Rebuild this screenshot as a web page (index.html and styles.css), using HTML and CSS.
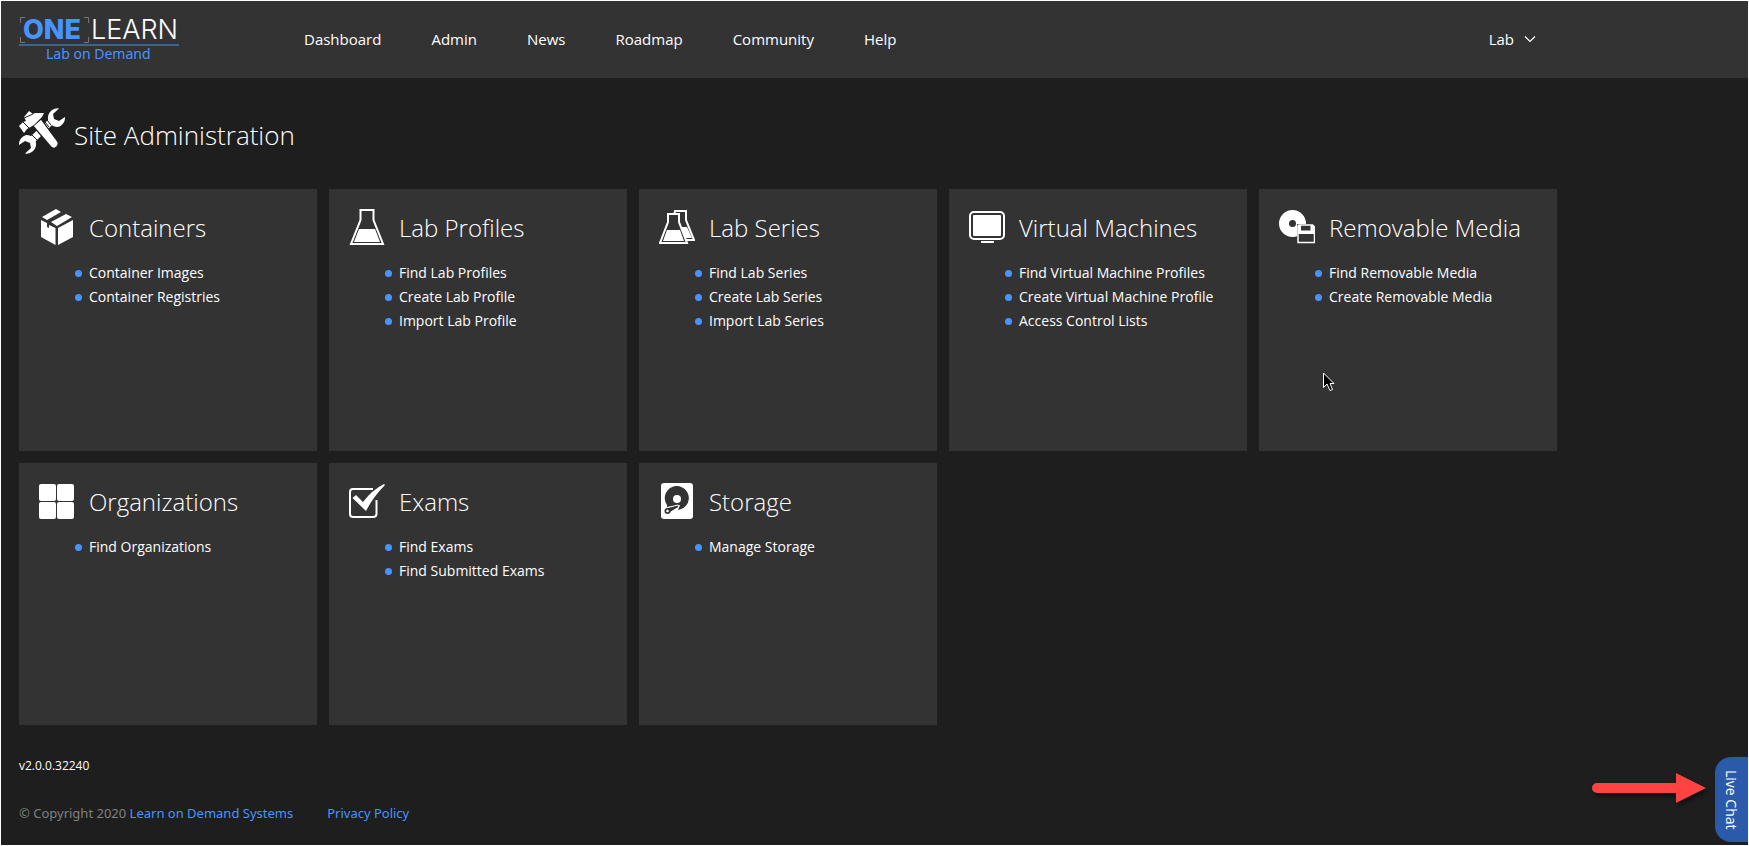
FILE: index.html
```html
<!DOCTYPE html>
<html lang="en">
<head>
<meta charset="utf-8">
<title>Site Administration</title>
<link rel="stylesheet" href="styles.css">
</head>
<body>
<div class="page">
  <header class="topbar">
    <a class="logo" href="#" aria-label="One Learn Lab on Demand">
      <svg width="166" height="56" viewBox="0 -5 166 56">
        <path class="logo-bracket" d="M6 1.500H1.500V7M1.500 21V26.500H6M65 1.500H69.500V7M69.500 21V26.500H65"/>
        <text class="logo-one" x="4" y="23">ONE</text>
        <text class="logo-learn" x="72" y="23">LEARN</text>
        <rect class="logo-rule" x="0" y="28" width="160" height="2"/>
        <text class="logo-sub" x="27" y="43">Lab on Demand</text>
      </svg>
    </a>
    <nav class="nav">
      <a href="#">Dashboard</a>
      <a href="#">Admin</a>
      <a href="#">News</a>
      <a href="#">Roadmap</a>
      <a href="#">Community</a>
      <a href="#">Help</a>
    </nav>
    <button class="account" type="button">Lab
      <svg width="12" height="8" viewBox="0 0 12 8"><path d="M1 1.500L6 6.500L11 1.500" fill="none" stroke="currentColor" stroke-width="1.200"/></svg>
    </button>
  </header>

  <main class="content">
    <div class="heading">
      <svg width="46" height="46" viewBox="0 0 46 46" fill="#fff">
        <path d="M9 31L31 10L35 15L14 36Z"/>
        <path d="M40 .5A9.500 9.500 0 0 0 29 11A9.500 9.500 0 0 0 39 19A9.500 9.500 0 0 0 46 9L40 13L35 11L34 6Z"/>
        <path d="M6 45.500A9.500 9.500 0 0 0 17 35A9.500 9.500 0 0 0 7 27A9.500 9.500 0 0 0 0 37L6 33L11 35L12 40Z"/>
        <path d="M26 14l4 5M28 12l4 5M13 27l5 5" stroke="#1e1e1e" stroke-width="1"/>
        <path d="M14 18L22 11L39 34Q40 38 36 40Q34 41 32 39Z" stroke="#1e1e1e" stroke-width="1.200"/>
        <path d="M10 3L14 6L16 5H25L23 9L15 17L8 21L5 25L0 18L4 14L7 13L5 9Z"/>
        <path d="M5 10L14 6M4 14L11 21" stroke="#1e1e1e" stroke-width="1"/>
      </svg>
      <h1>Site Administration</h1>
    </div>

    <div class="cards">
      <section class="card">
        <svg class="icon" viewBox="0 0 36 36" fill="#fff">
          <path d="M3 8L17 0L22 3L8 11ZM12 13L27 5L33 8L18 17ZM2 11L8 14V18L10 19V16L16.500 19V36L2 28ZM34 11V28L19 36V19Z"/>
        </svg>
        <h2>Containers</h2>
        <ul>
          <li><a href="#">Container Images</a></li>
          <li><a href="#">Container Registries</a></li>
        </ul>
      </section>
      <section class="card">
        <svg class="icon" viewBox="0 0 36 36">
          <path d="M11.500 1H24.500V11L34 35H2L11.500 11Z" fill="none" stroke="#fff" stroke-width="2"/>
          <path d="M10 20H26L31 33H5Z" fill="#fff"/>
        </svg>
        <h2>Lab Profiles</h2>
        <ul>
          <li><a href="#">Find Lab Profiles</a></li>
          <li><a href="#">Create Lab Profile</a></li>
          <li><a href="#">Import Lab Profile</a></li>
        </ul>
      </section>
      <section class="card">
        <svg class="icon" viewBox="0 0 36 36">
          <path d="M16 2H27V11L35 31H20L14 11Z" fill="#333" stroke="#fff" stroke-width="2"/>
          <path d="M22 18H28L33 29H26Z" fill="#fff"/>
          <path d="M9 5H20V13L28 34H1L9 13Z" fill="#333" stroke="#fff" stroke-width="2"/>
          <path d="M8 21H21L25 32H4Z" fill="#fff"/>
        </svg>
        <h2>Lab Series</h2>
        <ul>
          <li><a href="#">Find Lab Series</a></li>
          <li><a href="#">Create Lab Series</a></li>
          <li><a href="#">Import Lab Series</a></li>
        </ul>
      </section>
      <section class="card">
        <svg class="icon" viewBox="0 0 36 36">
          <rect x="1" y="3" width="34" height="27" rx="4" fill="#333" stroke="#fff" stroke-width="2"/>
          <rect x="4" y="6" width="28" height="21" rx="1" fill="#fff"/>
          <path d="M12 32H25V33Q25 34 24 34H13Q12 34 12 33Z" fill="#fff"/>
        </svg>
        <h2>Virtual Machines</h2>
        <ul>
          <li><a href="#">Find Virtual Machine Profiles</a></li>
          <li><a href="#">Create Virtual Machine Profile</a></li>
          <li><a href="#">Access Control Lists</a></li>
        </ul>
      </section>
      <section class="card">
        <svg class="icon" viewBox="0 0 36 36">
          <circle cx="13.500" cy="14.500" r="8.500" fill="none" stroke="#fff" stroke-width="10"/>
          <path d="M18 15H36V35H18Z" fill="#333"/>
          <path d="M20 16H33.500L35.500 18V33.500H19V17Q19 16 20 16Z" fill="#333" stroke="#fff" stroke-width="1.500"/>
          <path d="M19 23H35.500V25H19ZM19 16H22V23H19ZM31.500 16H34L36 18V23H31.500Z" fill="#fff"/>
          <path d="M21 21.500H32V23H21Z" fill="#fff"/>
        </svg>
        <h2>Removable Media</h2>
        <ul>
          <li><a href="#">Find Removable Media</a></li>
          <li><a href="#">Create Removable Media</a></li>
        </ul>
        <svg class="pointer" width="12" height="20" viewBox="0 0 12 20">
          <path d="M.5 1V15.500L4 12L7 18.500L9.500 17.500L7 11.500H11Z" fill="#000" stroke="#fff"/>
        </svg>
      </section>
      <section class="card">
        <svg class="icon" viewBox="0 0 36 36" fill="#fff">
          <rect x="0" y="1" width="17" height="17" rx="2"/><rect x="18" y="1" width="17" height="17" rx="2"/>
          <rect x="0" y="19" width="17" height="17" rx="2"/><rect x="18" y="19" width="17" height="17" rx="2"/>
        </svg>
        <h2>Organizations</h2>
        <ul>
          <li><a href="#">Find Organizations</a></li>
        </ul>
      </section>
      <section class="card">
        <svg class="icon" viewBox="0 0 36 36">
          <path d="M24 6H4Q1 6 1 9V31Q1 34 4 34H24Q27.500 34 27.500 31V17" fill="none" stroke="#fff" stroke-width="2"/>
          <path d="M3.500 15L7 12L14 19Q23 7 35 1L36 2Q24 14 17 28Z" fill="#fff"/>
        </svg>
        <h2>Exams</h2>
        <ul>
          <li><a href="#">Find Exams</a></li>
          <li><a href="#">Find Submitted Exams</a></li>
        </ul>
      </section>
      <section class="card">
        <svg class="icon" viewBox="0 0 36 36">
          <rect x="2" y="0" width="32" height="36" rx="3" fill="#fff"/>
          <path d="M8 22A12 12 0 1 1 19 27L21 22L8 24Z" fill="#333"/>
          <circle cx="18" cy="16" r="4" fill="#fff"/>
          <path d="M7 25L19 22L20 24L10 30Z" fill="#333" stroke="#fff" stroke-width="1"/>
          <circle cx="8.500" cy="28" r="3" fill="#333"/><circle cx="8.500" cy="28" r="1.300" fill="#fff"/>
        </svg>
        <h2>Storage</h2>
        <ul>
          <li><a href="#">Manage Storage</a></li>
        </ul>
      </section>
    </div>
  </main>

  <footer class="footer">
    <p class="version">v2.0.0.32240</p>
    <p class="legal"><span>© Copyright 2020 <a href="#">Learn on Demand Systems</a></span><a href="#">Privacy Policy</a></p>
  </footer>

  <svg class="arrow" width="120" height="44" viewBox="0 0 120 44">
    <path d="M9 14H88V4L118 19L88 34V24H9A5 5 0 0 1 9 14Z" fill="#ff4343"/>
  </svg>
  <button class="chat" type="button">Live Chat</button>
</div>
</body>
</html>
```
FILE: styles.css
```css
* { box-sizing: border-box; }
body {
  margin: 0;
  font-family: "Open Sans", "Noto Sans", sans-serif;
  font-size: 14px;
  color: #fff;
}
h1, h2, p, ul { margin: 0; padding: 0; }
h1, h2 { font-weight: 300; }
a { color: inherit; text-decoration: none; }
button { font: inherit; color: inherit; border: 0; cursor: pointer; }

.page {
  position: relative;
  min-height: 100vh;
  background: #1e1e1e;
  border: 1px solid #fff;
}

.topbar {
  display: grid;
  grid-template-columns: 285px 1fr auto;
  align-items: center;
  height: 77px;
  padding: 0 212px 2px 18px;
  background: #333;
  font-size: 15px;
}
.logo svg { display: block; overflow: visible; }
.logo-bracket { fill: none; stroke: #777; }
.logo-one { font: 800 27px Inter, sans-serif; fill: #4894fe; }
.logo-learn { font: 300 27px Inter, sans-serif; fill: #fff; }
.logo-rule { fill: #3c6396; }
.logo-sub { font: 400 14px "Noto Sans", sans-serif; fill: #4894fe; }
.nav { display: flex; gap: 50px; }
.account {
  display: flex;
  align-items: center;
  gap: 10px;
  padding: 0;
  background: none;
}

.content { max-width: 1574px; padding: 28px 18px 0; }
.heading { display: flex; align-items: center; gap: 9px; height: 49px; }
.heading h1 { font-size: 26px; line-height: 36px; padding-top: 8px; }

.cards {
  display: grid;
  grid-template-columns: repeat(auto-fill, 298px);
  grid-auto-rows: minmax(262px, auto);
  gap: 12px;
  margin-top: 34px;
}
.card {
  position: relative;
  display: grid;
  grid-template-columns: 36px 1fr;
  grid-template-rows: 36px auto;
  align-content: start;
  column-gap: 14px;
  row-gap: 16px;
  padding: 20px 12px 20px 20px;
  background: #333;
}
.icon { width: 36px; height: 36px; }
.card h2 { font-size: 24px; line-height: 38px; }
.card ul { grid-column: 2; list-style: none; }
.card li {
  display: flex;
  align-items: center;
  line-height: 24px;
}
.card li::before {
  content: "";
  width: 7px;
  height: 7px;
  margin-left: -14px;
  margin-right: 7px;
  border-radius: 50%;
  background: #4894fe;
}
.pointer { position: absolute; left: 64px; top: 183px; }

.footer { padding: 32px 18px 18px; }
.version { font-size: 12px; line-height: 18px; }
.legal {
  display: flex;
  gap: 34px;
  margin-top: 28px;
  font-family: "Noto Sans", sans-serif;
  font-size: 13px;
  line-height: 20px;
  color: #808080;
}
.legal a { color: #4894fe; }

.arrow {
  position: absolute;
  right: 40px;
  bottom: 32px;
  width: 120px;
  height: 44px;
  filter: drop-shadow(2px 3px 2px #00000080);
}
.chat {
  position: absolute;
  right: 0;
  bottom: 3px;
  width: 33px;
  height: 85px;
  padding: 0;
  writing-mode: vertical-rl;
  font-size: 14px;
  background: #2c5aab;
  border-radius: 16px 0 0 16px;
}
```
